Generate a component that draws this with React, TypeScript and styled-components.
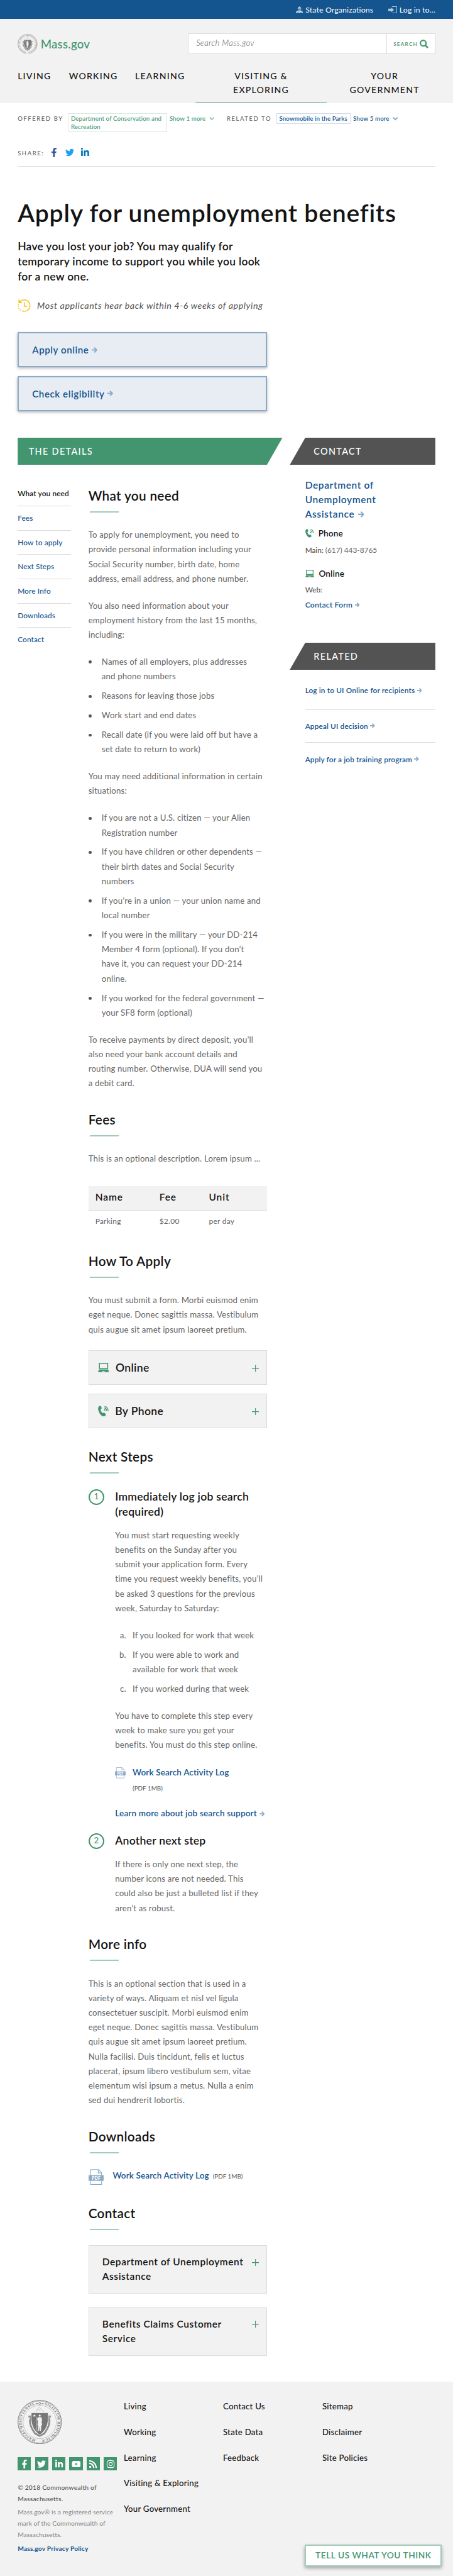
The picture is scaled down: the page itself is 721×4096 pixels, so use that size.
import React from "react";
import styled, { createGlobalStyle, css } from "styled-components";
import { FaFacebookF, FaTwitter, FaLinkedinIn, FaYoutube, FaRss, FaInstagram } from "react-icons/fa";

const c = {
  blue: "#14558f",
  blueSoft: "#8aaac7",
  bluePale: "#d0dde9",
  green: "#43956f",
  greenSoft: "#a1cab7",
  greenPale: "#d9eae2",
  ink: "#141414",
  text: "#535353",
  prose: "#666",
  line: "#dcdcdc",
  panel: "#f2f2f2",
};

/* 1rem is ten design units; the whole page scales from here. */
const Global = createGlobalStyle`
  html { font-size: 7.0368px; }
  *, *::before, *::after { box-sizing: border-box; }
  body { margin: 0; background: #fff; color: ${c.text}; font-family: Lato, "Liberation Sans", sans-serif; font-size: 1.88rem; }
  h1, h2, h3, p, ul, ol { margin: 0; padding: 0; font-weight: inherit; font-size: inherit; }
  ul, ol { list-style: none; }
  a { text-decoration: none; color: inherit; }
  svg { display: block; flex: none; }
`;

const Page = styled.div`
  position: relative;
  width: 721px;
  height: 4096px;
  overflow: hidden;
  white-space: pre;
`;

/* ---------- header ---------- */
const TopBar = styled.div`
  height: 4.3rem;
  background: ${c.blue};
  color: #fff;
  display: flex;
  justify-content: flex-end;
  align-items: center;
  gap: 3.4rem;
  padding-right: 4rem;
`;
const TopLink = styled.a<{ $gap: number }>`
  display: flex;
  align-items: center;
  gap: ${(p) => p.$gap}rem;
  font-size: 1.75rem;
  letter-spacing: 0.02rem;
  color: #fff;
  svg { color: #b4cade; }
`;
const Header = styled.header`
  height: 19rem;
  background: ${c.panel};
  padding: 3.3rem 4rem 0;
`;
const Brand = styled.div`
  display: flex;
  justify-content: space-between;
  height: 4.6rem;
`;
const Logo = styled.a`
  display: flex;
  align-items: center;
  gap: 0.7rem;
  color: ${c.green};
  font-size: 2.65rem;
  font-weight: 500;
  letter-spacing: 0.035rem;
`;
const SearchBox = styled.div`
  width: 56rem;
  display: flex;
  background: #fff;
  border: 0.2rem solid ${c.line};
`;
const SearchField = styled.div`
  flex: 1;
  padding-left: 1.75rem;
  line-height: 4.2rem;
  font-size: 1.85rem;
  font-style: italic;
  font-weight: 300;
  letter-spacing: 0.047rem;
`;
const SearchButton = styled.div`
  width: 10.9rem;
  border-left: 0.2rem solid ${c.line};
  display: flex;
  align-items: center;
  justify-content: center;
  gap: 0.4rem;
  color: ${c.green};
  font-size: 1.15rem;
  font-weight: 600;
  letter-spacing: 0.18rem;
`;
const MainNav = styled.nav`
  display: flex;
  margin-top: 3.4rem;
  height: 7.7rem;
  color: ${c.ink};
  font-size: 2rem;
  line-height: 3.1rem;
  font-weight: 500;
  letter-spacing: 0.175rem;
`;
const NavItem = styled.a<{ $w: number; $center?: boolean; $active?: boolean }>`
  position: relative;
  flex: none;
  width: ${(p) => p.$w}rem;
  margin-right: ${(p) => (p.$active ? 1.5 : 0)}rem;
  text-align: ${(p) => (p.$center ? "center" : "left")};
  ${(p) =>
    p.$active &&
    css`
      &::after {
        content: "";
        position: absolute;
        left: 0;
        right: 0;
        bottom: 0;
        height: 0.3rem;
        background: ${c.greenSoft};
        transform: skewX(-24deg);
      }
    `}
`;

/* ---------- relations + share ---------- */
const Wrap = styled.div`
  padding: 0 4rem;
`;
const Relations = styled.div`
  display: flex;
  align-items: flex-start;
  padding-top: 2.3rem;
  height: 10.2rem;
`;
const Label = styled.span`
  line-height: 2.5rem;
  font-size: 1.35rem;
  letter-spacing: 0.225rem;
`;
const RelGroup = styled.div<{ $tone: "green" | "blue"; $w: number }>`
  display: flex;
  align-items: flex-start;
  width: ${(p) => p.$w}rem;
  color: ${(p) => c[p.$tone]};
  font-size: 1.38rem;
  font-weight: ${(p) => (p.$tone === "blue" ? 600 : 500)};
  letter-spacing: 0.018rem;
  ${Label} { color: ${c.text}; font-weight: 400; }
`;
const Tag = styled.a<{ $tone: "green" | "blue"; $w: number }>`
  width: ${(p) => p.$w}rem;
  margin-left: 1.05rem;
  border: 0.2rem solid ${(p) => (p.$tone === "green" ? c.greenPale : c.bluePale)};
  padding: 0.1rem 0 0.1rem 0.55rem;
  line-height: 1.9rem;
`;
const ShowMore = styled.span<{ $tone: "green" | "blue" }>`
  display: flex;
  align-items: center;
  gap: 0.8rem;
  margin-left: 0.5rem;
  line-height: 2.5rem;
  svg { color: ${(p) => (p.$tone === "green" ? c.greenSoft : c.blueSoft)}; }
`;
const Share = styled.div`
  display: flex;
  align-items: center;
  height: 4.2rem;
  padding-bottom: 2.1rem;
  border-bottom: 0.15rem solid ${c.line};
  ${Label} { width: 7.2rem; padding-top: 0.2rem; }
`;
const ShareIcon = styled.a<{ $color: string; $w: number }>`
  display: flex;
  justify-content: center;
  width: 2rem;
  margin-right: 1.55rem;
  color: ${(p) => p.$color};
  svg { width: ${(p) => p.$w}rem; height: 2.1rem; }
`;

/* ---------- intro ---------- */
const Title = styled.h1`
  margin-top: 7rem;
  color: ${c.ink};
  font-size: 5.55rem;
  line-height: 6.4rem;
  font-weight: 600;
  letter-spacing: 0.115rem;
`;
const Lead = styled.p`
  margin-top: 2.9rem;
  color: ${c.ink};
  font-size: 2.48rem;
  line-height: 3.4rem;
  font-weight: 600;
  letter-spacing: 0.04rem;
`;
const Timing = styled.p`
  display: flex;
  align-items: center;
  gap: 1.4rem;
  height: 3rem;
  margin-top: 3.3rem;
  font-size: 2.03rem;
  line-height: 2.8rem;
  font-style: italic;
  letter-spacing: 0.083rem;
  svg { color: #f6c51b; }
`;
const Actions = styled.div`
  display: flex;
  flex-direction: column;
  gap: 2rem;
  margin-top: 4.6rem;
`;
const ActionLink = styled.a`
  display: flex;
  align-items: center;
  gap: 0.7rem;
  width: 56.4rem;
  height: 7.9rem;
  padding-left: 3rem;
  background: #e8edf4;
  border: 0.3rem solid ${c.blueSoft};
  box-shadow: 0 0.3rem 0.7rem rgba(0, 0, 0, 0.3);
  color: ${c.blue};
  font-size: 2.15rem;
  font-weight: 600;
  letter-spacing: 0.08rem;
  svg { color: ${c.blueSoft}; }
`;

/* ---------- body columns ---------- */
const Columns = styled.div`
  display: flex;
  justify-content: space-between;
  margin-top: 6rem;
`;
const Details = styled.main`
  width: 59.9rem;
`;
const Aside = styled.aside`
  width: 32.95rem;
`;
const bar = css`
  height: 6.2rem;
  line-height: 6.2rem;
  color: #fff;
  font-size: 2.05rem;
  font-weight: 500;
  letter-spacing: 0.19rem;
`;
const GreenBar = styled.div`
  ${bar}
  padding-left: 2.5rem;
  background: ${c.green};
  clip-path: polygon(0 0, 100% 0, calc(100% - 3.55rem) 100%, 0 100%);
`;
const GreyBar = styled.div`
  ${bar}
  padding-left: 5.45rem;
  background: ${c.text};
  clip-path: polygon(3.55rem 0, 100% 0, 100% 100%, 0 100%);
`;
const DetailsBody = styled.div`
  display: flex;
  gap: 4rem;
`;
const SideNav = styled.nav`
  width: 12rem;
  padding-top: 3.8rem;
  color: ${c.blue};
  font-size: 1.68rem;
  font-weight: 500;
  letter-spacing: 0.02rem;
`;
const SideNavItem = styled.a<{ $active?: boolean }>`
  display: block;
  height: 5.5rem;
  line-height: 5.3rem;
  ${(p) => p.$active && css`color: ${c.ink}; font-weight: 600;`}
  &:not(:last-child) { border-bottom: 0.15rem solid ${c.line}; }
`;
const Main = styled.div`
  width: 40.4rem;
  padding-top: 5.16rem;
`;
const Section = styled.section`
  & + & { margin-top: 4.73rem; }
`;
const Heading = styled.h2`
  height: 9rem;
  color: ${c.ink};
  font-size: 2.95rem;
  line-height: 3.6rem;
  font-weight: 600;
  letter-spacing: 0.045rem;
  &::after {
    content: "";
    display: block;
    width: 6.5rem;
    height: 0.3rem;
    margin: 1.65rem 0 0 0.3rem;
    background: ${c.greenSoft};
    transform: skewX(-24deg);
  }
`;
const Prose = styled.div`
  display: flex;
  flex-direction: column;
  gap: 2.8rem;
  color: ${c.prose};
  line-height: 3.3rem;
  font-weight: 400;
  letter-spacing: 0.024rem;
`;
const List = styled.ul`
  display: flex;
  flex-direction: column;
  gap: 1.1rem;
`;
const Bullet = styled.li`
  display: flex;
  &::before {
    content: "";
    flex: none;
    width: 0.7rem;
    height: 0.7rem;
    margin: 1.35rem 2.3rem 0 0;
    border-radius: 50%;
    background: ${c.text};
  }
`;
const Lettered = styled.li`
  display: flex;
  gap: 1.45rem;
`;
const Letter = styled.span`
  width: 2.5rem;
  text-align: right;
`;

const Fees = styled.div`
  margin-top: 4.5rem;
`;
const FeeRow = styled.div<{ $head?: boolean }>`
  display: grid;
  grid-template-columns: 14.5rem 11.2rem 1fr;
  padding-left: 1.55rem;
  height: 4.95rem;
  line-height: 4.95rem;
  color: ${c.prose};
  font-size: 1.7rem;
  font-weight: 400;
  letter-spacing: 0.04rem;
  ${(p) =>
    p.$head &&
    css`
      height: 5.5rem;
      line-height: 5rem;
      background: ${c.panel};
      border-bottom: 0.2rem solid ${c.line};
      color: ${c.ink};
      font-size: 2.2rem;
      font-weight: 600;
      letter-spacing: 0.13rem;
    `}
`;

const Accordions = styled.div<{ $top: number; $gap: number }>`
  display: flex;
  flex-direction: column;
  gap: ${(p) => p.$gap}rem;
  margin-top: ${(p) => p.$top}rem;
`;
const AccordionRow = styled.div<{ $tall?: boolean }>`
  display: flex;
  align-items: ${(p) => (p.$tall ? "flex-start" : "center")};
  height: ${(p) => (p.$tall ? 11 : 7.8)}rem;
  padding: ${(p) => (p.$tall ? "2rem 1.7rem 0 3rem" : "0 1.7rem 0 2rem")};
  background: ${c.panel};
  border: 0.2rem solid ${c.line};
  color: ${c.ink};
  font-weight: 600;
  font-size: ${(p) => (p.$tall ? 2.2 : 2.5)}rem;
  line-height: 3.3rem;
  letter-spacing: ${(p) => (p.$tall ? 0.08 : 0.05)}rem;
  svg { color: ${c.green}; }
`;
const AccordionText = styled.span`
  flex: 1;
  svg + & { padding-left: 1.5rem; }
`;
const PlusBox = styled.span<{ $tall?: boolean }>`
  margin-top: ${(p) => (p.$tall ? 0.95 : 0.2)}rem;
`;

const Step = styled.div`
  display: flex;
  gap: 2.45rem;
  & + & { margin-top: 2.8rem; }
`;
const StepNumber = styled.div`
  flex: none;
  width: 3.6rem;
  height: 3.6rem;
  border: 0.3rem solid ${c.green};
  border-radius: 50%;
  color: ${c.green};
  font-size: 1.8rem;
  font-weight: 500;
  line-height: 2.95rem;
  text-align: center;
`;
const StepTitle = styled.h3`
  margin-bottom: 2rem;
  color: ${c.ink};
  font-size: 2.5rem;
  line-height: 3.4rem;
  font-weight: 600;
  letter-spacing: 0.035rem;
`;
const DocLink = styled.a`
  color: ${c.blue};
  font-size: 1.92rem;
  line-height: 3.3rem;
  font-weight: 600;
  letter-spacing: 0.02rem;
`;
const DocMeta = styled.span`
  font-size: 1.4rem;
  line-height: 3.3rem;
`;
const StepDoc = styled.div`
  display: flex;
  gap: 1.55rem;
  margin: 3rem 0 2.4rem;
  svg { margin-top: 0.4rem; color: ${c.blueSoft}; }
`;
const DocText = styled.div`
  display: flex;
  flex-direction: column;
  gap: 0.2rem;
`;
const MoreLink = styled(DocLink)`
  display: flex;
  align-items: center;
  gap: 0.55rem;
  letter-spacing: 0.027rem;
  svg { color: ${c.blueSoft}; }
`;
const Download = styled.div`
  display: flex;
  height: 3.6rem;
  svg { width: 3.4rem; height: 3.6rem; margin: 0.15rem 2.1rem 0 0; color: ${c.blueSoft}; }
  ${DocMeta} { margin-left: 0.85rem; padding-top: 0.1rem; }
`;

/* ---------- sidebar ---------- */
const AsideBody = styled.div`
  padding: 2.9rem 0 0 3.5rem;
  height: 40.1rem;
`;
const Office = styled.a`
  color: ${c.blue};
  font-size: 2.2rem;
  line-height: 3.3rem;
  font-weight: 600;
  letter-spacing: 0.09rem;
  svg { display: inline-block; margin-left: 0.8rem; color: ${c.blueSoft}; }
`;
const Channel = styled.h3<{ $top: number }>`
  display: flex;
  align-items: center;
  margin-top: ${(p) => p.$top}rem;
  height: 3.3rem;
  color: ${c.ink};
  font-size: 1.93rem;
  font-weight: 600;
  letter-spacing: 0.02rem;
  svg { margin-right: 1.1rem; color: ${c.green}; }
`;
const ChannelLine = styled.p<{ $top: number }>`
  margin-top: ${(p) => p.$top}rem;
  color: ${c.prose};
  font-size: 1.68rem;
  line-height: 3.3rem;
  b { font-weight: 500; color: ${c.text}; }
`;
const ChannelLink = styled.a`
  display: flex;
  align-items: center;
  gap: 0.5rem;
  margin-top: 0.1rem;
  color: ${c.blue};
  font-size: 1.74rem;
  line-height: 3.3rem;
  font-weight: 600;
  letter-spacing: 0.02rem;
  svg { color: ${c.blueSoft}; }
`;
const RelatedLinks = styled.div`
  padding: 1rem 0 0 3.5rem;
`;
const RelatedLink = styled.a`
  display: flex;
  align-items: center;
  gap: 0.5rem;
  height: 7.5rem;
  padding-bottom: 0.1rem;
  color: ${c.blue};
  font-size: 1.67rem;
  font-weight: 600;
  letter-spacing: 0.025rem;
  svg { color: ${c.blueSoft}; }
  &:not(:last-child) { border-bottom: 0.15rem solid ${c.line}; }
  &:first-child { height: 8rem; padding-bottom: 0.6rem; }
`;

/* ---------- footer ---------- */
const Footer = styled.footer`
  display: flex;
  height: 44rem;
  margin-top: 5.9rem;
  padding: 4rem 4rem 0;
  background: ${c.panel};
`;
const FooterInfo = styled.div`
  width: 24rem;
  font-size: 1.46rem;
  line-height: 2.6rem;
`;
const Socials = styled.div`
  display: flex;
  gap: 0.9rem;
  margin: 3rem 0 2.5rem;
`;
const SocialSquare = styled.a<{ $w?: number }>`
  display: grid;
  place-items: center;
  width: 3rem;
  height: 3rem;
  background: ${c.green};
  color: #fff;
  svg { width: ${(p) => p.$w ?? 2}rem; height: 2rem; }
`;
const Copyright = styled.p`
  font-weight: 500;
  letter-spacing: 0.03rem;
`;
const Notice = styled.p`
  margin-top: 0.35rem;
  color: #858585;
  font-weight: 400;
  letter-spacing: 0.01rem;
`;
const Privacy = styled.a`
  display: block;
  margin-top: 0.4rem;
  color: ${c.blue};
  font-weight: 700;
  letter-spacing: 0.025rem;
`;
const FooterNav = styled.nav`
  width: 22.45rem;
  margin-top: -1.3rem;
`;
const FooterLink = styled.a`
  display: block;
  line-height: 5.77rem;
  color: ${c.ink};
  font-size: 1.88rem;
  font-weight: 500;
  letter-spacing: 0.033rem;
`;
const FeedbackButton = styled.a`
  position: absolute;
  right: 2.5rem;
  bottom: 2.1rem;
  width: 31rem;
  height: 5rem;
  border: 0.3rem solid ${c.greenSoft};
  background: #fff;
  box-shadow: 0 0.4rem 0.8rem rgba(0, 0, 0, 0.35);
  color: ${c.green};
  font-size: 1.95rem;
  line-height: 4.3rem;
  font-weight: 600;
  letter-spacing: 0.075rem;
  text-align: center;
`;

/* ---------- icons ---------- */
const Icon = styled.svg<{ $w: number; $h?: number }>`
  width: ${(p) => p.$w}rem;
  height: ${(p) => p.$h ?? p.$w}rem;
`;

const Arrow = ({ s = 1.3 }: { s?: number }) => (
  <Icon $w={s} viewBox="0 0 14 14" fill="none" stroke="currentColor" strokeWidth="3">
    <path d="M0 7h11M6.3 1.2 12 7l-5.7 5.8" />
  </Icon>
);
const Chevron = () => (
  <Icon $w={1.2} $h={0.8} viewBox="0 0 12 8" fill="none" stroke="currentColor" strokeWidth="2.8">
    <path d="M1 1l5 5 5-5" />
  </Icon>
);
const Laptop = ({ s }: { s: number }) => (
  <Icon $w={s} $h={s * 0.84} viewBox="0 0 25 21" fill="currentColor">
    <path fillRule="evenodd" d="M2 0h21v14H2zM4.200 2.200v9.600h16.600V2.200z" />
    <path fillRule="evenodd" d="M2 15h21l2 6H0zm8 3.600v1.200h5v-1.200z" />
  </Icon>
);
const Phone = ({ s }: { s: number }) => (
  <Icon $w={s} $h={s * 1.04} viewBox="0 0 24 25" fill="currentColor">
    <path d="M1.5 2.5C3 1 5 0 6 .8c1.4 1 2.2 3.5 2.2 5.4 0 1.5-2.4 1.7-2.3 3.3.2 2.5 2.7 6.2 4.6 7.3 1.2.7 2.4-1.1 3.7-.5 1.7.9 3 2.7 3.4 4.3.3 1.4-1.7 3.2-4.2 3.7-3.1.5-6.8-2.2-9.6-6.5C.6 12.8-1.2 5.8 1.5 2.5z" />
    <g fill="none" stroke="currentColor" strokeWidth="1.9">
      <path d="M15 1.5c4.5.8 7.6 5 7.9 10.5" />
      <path d="M14.5 5c3 .7 4.8 3.3 5 6.5" />
    </g>
    <path d="M14 8c2 .4 3 2 3 3.6l-3.6-.8z" />
  </Icon>
);
const Plus = () => (
  <Icon $w={1.6} viewBox="0 0 16 16" fill="none" stroke="currentColor" strokeWidth="1.6">
    <path d="M8 0v16M0 8h16" />
  </Icon>
);
const Magnifier = () => (
  <Icon $w={2} viewBox="0 0 20 20" fill="none" stroke="currentColor">
    <circle cx="8" cy="8" r="6.4" strokeWidth="3.2" />
    <path d="M12.5 12.5l6 6" strokeWidth="3.6" />
  </Icon>
);
const Capitol = () => (
  <Icon $w={1.6} viewBox="0 0 16 16" fill="currentColor">
    <path d="M7.3 0h1.4v1.5c2 .4 3.3 1.9 3.5 3.9H3.8c.2-2 1.5-3.5 3.5-3.9zM4.200 6.300h7.600v1H4.200zM4.500 8h1.300v2H4.500zm2.800 0h1.400v2H7.300zm2.900 0h1.300v2h-1.300z" />
    <path fillRule="evenodd" d="M2.500 9.800h11v2H16V16H0v-4.200h2.500zM2 13v1.500h1.500V13zm3 0v1.500h1.500V13zm4.500 0v1.500H11V13zm3 0v1.500H14V13z" />
  </Icon>
);
const LogIn = () => (
  <Icon $w={2} $h={1.6} viewBox="0 0 20 16" fill="currentColor">
    <path d="M0 5.200h6.500V2.500L13 8l-6.500 5.500v-2.700H0z" />
    <path d="M8.500.7h10.800v14.600H8.500" fill="none" stroke="currentColor" strokeWidth="1.4" />
  </Icon>
);
const Clock = () => (
  <Icon $w={3} viewBox="0 0 30 30" fill="none" stroke="currentColor" strokeWidth="2.1">
    <path d="M5.500 6.500A13 13 0 1 1 12 28.200" />
    <path d="M12 28.200A13 13 0 0 1 2.500 10" strokeDasharray="2.600 2.200" />
    <path d="M15.500 8v9h6.500" />
    <path d="M2 .8v9h9z" fill="currentColor" stroke="none" />
  </Icon>
);
const PdfText = styled.text`
  font: 900 7px Lato, sans-serif;
  letter-spacing: 0.2px;
`;
const PdfIcon = () => (
  <Icon $w={2.4} $h={2.5} viewBox="0 0 24 25">
    <path d="M3.200.6h12.600l5 5v18.800H3.200z" fill="#fff" stroke="currentColor" strokeWidth="1.100" />
    <path d="M15.500.6v5.300h5.300" fill="none" stroke="currentColor" strokeWidth="1.100" />
    <path d="M0 9.500h24v9H0z" fill="currentColor" />
    <PdfText x="12.1" y="16.6" textAnchor="middle" fill="#fff">PDF</PdfText>
  </Icon>
);
const SealText = styled.text`
  font: 700 8.2px "Liberation Serif", serif;
`;
const Seal = ({ s, id }: { s: number; id: string }) => (
  <Icon $w={s} viewBox="0 0 100 100" fill="none" stroke="#777">
    <circle cx="50" cy="50" r="49.2" strokeWidth="1.3" />
    <circle cx="50" cy="50" r="47.3" strokeWidth="0.7" />
    <circle cx="50" cy="50" r="37.6" strokeWidth="0.9" strokeDasharray="1 0.6" />
    <path id={id} d="M50 90.5A40.5 40.5 0 1 1 50.100 90.500" stroke="none" />
    <SealText fill="#777" stroke="none">
      <textPath href={`#${id}`} startOffset="9" textLength="108">MASSACHUSETTENSIS.</textPath>
    </SealText>
    <SealText fill="#777" stroke="none">
      <textPath href={`#${id}`} startOffset="138" textLength="112">SIGILLUM REIPUBLICÆ</textPath>
    </SealText>
    <path d="M41 8.300h5M54 8.300h5" strokeWidth="1.600" />
    <circle cx="50" cy="8.3" r="2.2" strokeWidth="1.2" />
    <path d="M42 27l3.500-7 3.500-4 4 4 3.500 4 3 3M46 20l6 5" stroke="#bbb" strokeWidth="1.3" />
    <path d="M24.500 37.500h5v6l-2 3.500 1.500 9 3.500 9 7 11 10.500 5.500 10.500-5.500 7-11 3.500-9 1.500-9-2-3.500v-6h5" strokeWidth="3.6" />
    <path d="M24.500 37.500h5v6l-2 3.500 1.500 9 3.500 9 7 11 10.500 5.500 10.500-5.500 7-11 3.500-9 1.500-9-2-3.500v-6h5" stroke="#f2f2f2" strokeWidth="0.8" strokeDasharray="1.5 1.2" />
    <path d="M31 29h38c1 19 1 35-19 50.500C30 64 30 48 31 29z" fill="#777" stroke="#f2f2f2" strokeWidth="1.2" />
    <path d="M38 32l1 2.300h2.400l-1.900 1.500.7 2.400-2.200-1.400-2.200 1.400.7-2.400-1.900-1.500H37z" fill="#f2f2f2" stroke="none" />
    <circle cx="50" cy="35.5" r="2.3" fill="#f2f2f2" stroke="none" />
    <path d="M46.500 39h7.500l1.500 8-1.200 1 1.200 9-2 1-.5 12.500h-2l-1-12-1.200 12h-2.300l-.3-13-1.200-1 1-9-2.300-4z" fill="#f2f2f2" stroke="none" />
    <path d="M42.500 38c-1 10-1 20 1.500 32" stroke="#f2f2f2" strokeWidth="0.9" />
  </Icon>
);

/* ---------- content ---------- */
const sideLinks = ["What you need", "Fees", "How to apply", "Next Steps", "More Info", "Downloads", "Contact"];
const jobs = [
  "Names of all employers, plus addresses\nand phone numbers",
  "Reasons for leaving those jobs",
  "Work start and end dates",
  "Recall date (if you were laid off but have a\nset date to return to work)",
];
const situations = [
  "If you are not a U.S. citizen — your Alien\nRegistration number",
  "If you have children or other dependents —\ntheir birth dates and Social Security\nnumbers",
  "If you’re in a union — your union name and\nlocal number",
  "If you were in the military — your DD-214\nMember 4 form (optional). If you don’t\nhave it, you can request your DD-214\nonline.",
  "If you worked for the federal government —\nyour SF8 form (optional)",
];
const questions = [
  ["a.", "If you looked for work that week"],
  ["b.", "If you were able to work and\navailable for work that week"],
  ["c.", "If you worked during that week"],
];
const related = ["Log in to UI Online for recipients", "Appeal UI decision", "Apply for a job training program"];
const footerLinks = [
  ["Living", "Working", "Learning", "Visiting & Exploring", "Your Government"],
  ["Contact Us", "State Data", "Feedback"],
  ["Sitemap", "Disclaimer", "Site Policies"],
];

export default function App() {
  return (
    <Page>
      <Global />
      <TopBar>
        <TopLink $gap={0.6}><Capitol />State Organizations</TopLink>
        <TopLink $gap={0.5}><LogIn />Log in to...</TopLink>
      </TopBar>
      <Header>
        <Brand>
          <Logo><Seal s={4.5} id="seal-top" />Mass.gov</Logo>
          <SearchBox>
            <SearchField>Search Mass.gov</SearchField>
            <SearchButton>SEARCH<Magnifier /></SearchButton>
          </SearchBox>
        </Brand>
        <MainNav>
          <NavItem $w={11.6}>LIVING</NavItem>
          <NavItem $w={14.95}>WORKING</NavItem>
          <NavItem $w={13.65}>LEARNING</NavItem>
          <NavItem $w={29.7} $center $active>{"VISITING &\nEXPLORING"}</NavItem>
          <NavItem $w={23.2} $center>{"YOUR\nGOVERNMENT"}</NavItem>
        </MainNav>
      </Header>

      <Wrap>
        <Relations>
          <RelGroup $tone="green" $w={47.3}>
            <Label>OFFERED BY</Label>
            <Tag $tone="green" $w={22.5}>{"Department of Conservation and\nRecreation"}</Tag>
            <ShowMore $tone="green">Show 1 more<Chevron /></ShowMore>
          </RelGroup>
          <RelGroup $tone="blue" $w={40}>
            <Label>RELATED TO</Label>
            <Tag $tone="blue" $w={16.9}>Snowmobile in the Parks</Tag>
            <ShowMore $tone="blue">Show 5 more<Chevron /></ShowMore>
          </RelGroup>
        </Relations>
        <Share>
          <Label>SHARE:</Label>
          <ShareIcon $color="#3b5998" $w={1.4}><FaFacebookF /></ShareIcon>
          <ShareIcon $color="#1da1f2" $w={2}><FaTwitter /></ShareIcon>
          <ShareIcon $color="#0077b5" $w={2.1}><FaLinkedinIn /></ShareIcon>
        </Share>

        <Title>Apply for unemployment benefits</Title>
        <Lead>{"Have you lost your job? You may qualify for\ntemporary income to support you while you look\nfor a new one."}</Lead>
        <Timing><Clock />Most applicants hear back within 4-6 weeks of applying</Timing>
        <Actions>
          <ActionLink>Apply online<Arrow /></ActionLink>
          <ActionLink>Check eligibility<Arrow /></ActionLink>
        </Actions>

        <Columns>
          <Details>
            <GreenBar>THE DETAILS</GreenBar>
            <DetailsBody>
              <SideNav>
                {sideLinks.map((t, i) => <SideNavItem key={t} $active={i === 0}>{t}</SideNavItem>)}
              </SideNav>
              <Main>
                <Section>
                  <Heading>What you need</Heading>
                  <Prose>
                    <p>{"To apply for unemployment, you need to\nprovide personal information including your\nSocial Security number, birth date, home\naddress, email address, and phone number."}</p>
                    <p>{"You also need information about your\nemployment history from the last 15 months,\nincluding:"}</p>
                    <List>{jobs.map((t) => <Bullet key={t}>{t}</Bullet>)}</List>
                    <p>{"You may need additional information in certain\nsituations:"}</p>
                    <List>{situations.map((t) => <Bullet key={t}>{t}</Bullet>)}</List>
                    <p>{"To receive payments by direct deposit, you’ll\nalso need your bank account details and\nrouting number. Otherwise, DUA will send you\na debit card."}</p>
                  </Prose>
                </Section>
                <Section>
                  <Heading>Fees</Heading>
                  <Prose><p>This is an optional description. Lorem ipsum ...</p></Prose>
                  <Fees>
                    <FeeRow $head><span>Name</span><span>Fee</span><span>Unit</span></FeeRow>
                    <FeeRow><span>Parking</span><span>$2.00</span><span>per day</span></FeeRow>
                  </Fees>
                </Section>
                <Section>
                  <Heading>How To Apply</Heading>
                  <Prose>
                    <p>{"You must submit a form. Morbi euismod enim\neget neque. Donec sagittis massa. Vestibulum\nquis augue sit amet ipsum laoreet pretium."}</p>
                  </Prose>
                  <Accordions $top={3.04} $gap={2}>
                    <AccordionRow><Laptop s={2.5} /><AccordionText>Online</AccordionText><PlusBox><Plus /></PlusBox></AccordionRow>
                    <AccordionRow><Phone s={2.4} /><AccordionText>By Phone</AccordionText><PlusBox><Plus /></PlusBox></AccordionRow>
                  </Accordions>
                </Section>
                <Section>
                  <Heading>Next Steps</Heading>
                  <Step>
                    <StepNumber>1</StepNumber>
                    <div>
                      <StepTitle>{"Immediately log job search\n(required)"}</StepTitle>
                      <Prose>
                        <p>{"You must start requesting weekly\nbenefits on the Sunday after you\nsubmit your application form. Every\ntime you request weekly benefits, you’ll\nbe asked 3 questions for the previous\nweek, Saturday to Saturday:"}</p>
                        <List as="ol">
                          {questions.map(([l, t]) => <Lettered key={l}><Letter>{l}</Letter>{t}</Lettered>)}
                        </List>
                        <p>{"You have to complete this step every\nweek to make sure you get your\nbenefits. You must do this step online."}</p>
                      </Prose>
                      <StepDoc>
                        <PdfIcon />
                        <DocText>
                          <DocLink>Work Search Activity Log</DocLink>
                          <DocMeta>(PDF 1MB)</DocMeta>
                        </DocText>
                      </StepDoc>
                      <MoreLink>Learn more about job search support<Arrow s={1.2} /></MoreLink>
                    </div>
                  </Step>
                  <Step>
                    <StepNumber>2</StepNumber>
                    <div>
                      <StepTitle>Another next step</StepTitle>
                      <Prose>
                        <p>{"If there is only one next step, the\nnumber icons are not needed. This\ncould also be just a bulleted list if they\naren’t as robust."}</p>
                      </Prose>
                    </div>
                  </Step>
                </Section>
                <Section>
                  <Heading>More info</Heading>
                  <Prose>
                    <p>{"This is an optional section that is used in a\nvariety of ways. Aliquam et nisl vel ligula\nconsectetuer suscipit. Morbi euismod enim\neget neque. Donec sagittis massa. Vestibulum\nquis augue sit amet ipsum laoreet pretium.\nNulla facilisi. Duis tincidunt, felis et luctus\nplacerat, ipsum libero vestibulum sem, vitae\nelementum wisi ipsum a metus. Nulla a enim\nsed dui hendrerit lobortis."}</p>
                  </Prose>
                </Section>
                <Section>
                  <Heading>Downloads</Heading>
                  <Download>
                    <PdfIcon />
                    <DocLink>Work Search Activity Log</DocLink>
                    <DocMeta>(PDF 1MB)</DocMeta>
                  </Download>
                </Section>
                <Section>
                  <Heading>Contact</Heading>
                  <Accordions $top={0} $gap={3}>
                    <AccordionRow $tall><AccordionText>{"Department of Unemployment\nAssistance"}</AccordionText><PlusBox $tall><Plus /></PlusBox></AccordionRow>
                    <AccordionRow $tall><AccordionText>{"Benefits Claims Customer\nService"}</AccordionText><PlusBox $tall><Plus /></PlusBox></AccordionRow>
                  </Accordions>
                </Section>
              </Main>
            </DetailsBody>
          </Details>
          <Aside>
            <GreyBar>CONTACT</GreyBar>
            <AsideBody>
              <Office>{"Department of\nUnemployment\nAssistance"}<Arrow s={1.4} /></Office>
              <Channel $top={0.95}><Phone s={1.9} />Phone</Channel>
              <ChannelLine $top={0.45}><b>Main:</b> (617) 443-8765</ChannelLine>
              <Channel $top={2.1}><Laptop s={2} />Online</Channel>
              <ChannelLine $top={0.3}><b>Web:</b></ChannelLine>
              <ChannelLink>Contact Form<Arrow s={1.1} /></ChannelLink>
            </AsideBody>
            <GreyBar>RELATED</GreyBar>
            <RelatedLinks>
              {related.map((t) => <RelatedLink key={t}>{t}<Arrow s={1.1} /></RelatedLink>)}
            </RelatedLinks>
          </Aside>
        </Columns>
      </Wrap>

      <Footer>
        <FooterInfo>
          <Seal s={10} id="seal-foot" />
          <Socials>
            <SocialSquare $w={1.4}><FaFacebookF /></SocialSquare>
            <SocialSquare><FaTwitter /></SocialSquare>
            <SocialSquare><FaLinkedinIn /></SocialSquare>
            <SocialSquare $w={2.1}><FaYoutube /></SocialSquare>
            <SocialSquare><FaRss /></SocialSquare>
            <SocialSquare><FaInstagram /></SocialSquare>
          </Socials>
          <Copyright>{"© 2018 Commonwealth of\nMassachusetts."}</Copyright>
          <Notice>{"Mass.gov® is a registered service\nmark of the Commonwealth of\nMassachusetts."}</Notice>
          <Privacy>Mass.gov Privacy Policy</Privacy>
        </FooterInfo>
        {footerLinks.map((col) => (
          <FooterNav key={col[0]}>{col.map((t) => <FooterLink key={t}>{t}</FooterLink>)}</FooterNav>
        ))}
      </Footer>
      <FeedbackButton>TELL US WHAT YOU THINK</FeedbackButton>
    </Page>
  );
}
